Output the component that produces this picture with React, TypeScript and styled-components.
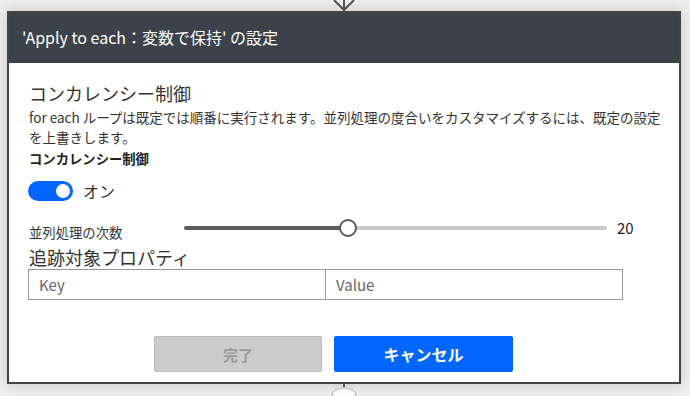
import React from "react";
import styled, { createGlobalStyle } from "styled-components";

const GlobalStyle = createGlobalStyle`
  html, body {
    margin: 0;
    padding: 0;
    background: #efefef;
    font-family: "Noto Sans CJK JP", "Noto Sans", sans-serif;
    color: #222;
  }
  * { box-sizing: border-box; }
`;

const Page = styled.div`
  width: 690px;
  height: 396px;
  padding-left: 7px;
  display: flex;
  flex-direction: column;
  overflow: hidden;
`;

const Connector = styled.div<{ $h: number }>`
  width: 674px;
  height: ${(p) => p.$h}px;
  display: flex;
  flex-direction: column;
  align-items: center;
`;

const Dialog = styled.div`
  width: 674px;
  border: 2px solid #454545;
  background: #fff;
  box-shadow: 0 0 14px rgba(0, 0, 0, 0.18);
  display: flex;
  flex-direction: column;
`;

const Header = styled.div`
  height: 50px;
  background: #3b4249;
  color: #fff;
  font-size: 16px;
  display: flex;
  align-items: center;
  padding-left: 13px;
  padding-bottom: 2px;
`;

const Body = styled.div`
  padding: 18px 14px 10px 19px;
  display: flex;
  flex-direction: column;
`;

const SectionTitle = styled.div<{ $mt?: number }>`
  font-size: 18px;
  line-height: 24px;
  color: #333;
  margin-top: ${(p) => p.$mt ?? 0}px;
  padding-left: 1px;
`;

const Description = styled.div`
  font-size: 13.5px;
  line-height: 20px;
  color: #333;
  margin-top: 2px;
  padding-left: 1px;
`;

const FieldLabel = styled.div`
  font-size: 13.33px;
  line-height: 20px;
  font-weight: 700;
  color: #222;
  margin-top: 2px;
  padding-left: 1px;
`;

const ToggleRow = styled.div`
  display: flex;
  align-items: center;
  gap: 10px;
  margin-top: 12px;
  height: 20px;
`;

const Toggle = styled.div<{ $on: boolean }>`
  position: relative;
  width: 45px;
  height: 20px;
  border-radius: 10px;
  background: ${(p) => (p.$on ? "#0066ff" : "#c8c8c8")};
`;

const Knob = styled.span<{ $on: boolean }>`
  position: absolute;
  top: 3px;
  ${(p) => (p.$on ? "right: 3px;" : "left: 3px;")}
  width: 14px;
  height: 14px;
  border-radius: 50%;
  background: #fff;
`;

const ToggleText = styled.span`
  font-size: 16px;
  line-height: 20px;
  color: #333;
`;

const SliderRow = styled.div`
  display: flex;
  align-items: center;
  height: 20px;
  margin-top: 17px;
`;

const SliderLabel = styled.div`
  width: 156px;
  font-size: 13.33px;
  line-height: 20px;
  color: #333;
  padding-left: 1px;
  margin-top: 10px;
`;

const Track = styled.div`
  position: relative;
  width: 423px;
  height: 4px;
  border-radius: 2px;
  background: #c8c8c8;
`;

const Fill = styled.div`
  height: 100%;
  border-radius: 2px;
  background: #5b5b5b;
`;

const Thumb = styled.div`
  position: absolute;
  top: 50%;
  width: 18px;
  height: 18px;
  margin: -9px 0 0 -9px;
  border-radius: 50%;
  border: 2px solid #5b5b5b;
  background: #fff;
`;

const SliderValue = styled.div`
  margin-left: 10px;
  font-size: 15px;
  line-height: 20px;
  color: #222;
`;

const InputPair = styled.div`
  display: flex;
  width: 595px;
`;

const TextInput = styled.input<{ $joined?: boolean }>`
  flex: 1;
  min-width: 0;
  height: 31px;
  border: 1px solid #979797;
  ${(p) => (p.$joined ? "border-left: none;" : "")}
  padding: 0 10px;
  font-family: inherit;
  font-size: 15px;
  color: #333;
  background: #fff;
  outline: none;
  &::placeholder { color: #666; }
`;

const Footer = styled.div`
  display: flex;
  gap: 12px;
  margin-top: 36px;
  padding-left: 126px;
`;

const Button = styled.button<{ $primary?: boolean }>`
  height: 36px;
  width: ${(p) => (p.$primary ? 179 : 168)}px;
  border-radius: 2px;
  font-family: inherit;
  font-weight: 700;
  font-size: ${(p) => (p.$primary ? 16 : 15)}px;
  border: 1px solid ${(p) => (p.$primary ? "#0066ff" : "#b8b8b8")};
  background: ${(p) => (p.$primary ? "#0066ff" : "#cccccc")};
  color: ${(p) => (p.$primary ? "#fff" : "#9a9a9a")};
  padding: 0;
`;

const LinkLine = styled.div`
  width: 2px;
  height: 6px;
  background: #555;
`;

const Node = styled.div`
  width: 26px;
  height: 26px;
  border-radius: 50%;
  border: 2px solid #cfcfcf;
  background: #fafafa;
`;

export default function App() {
  const min = 1;
  const max = 50;
  const value = 20;
  const pct = ((value - min) / (max - min)) * 100;
  return (
    <>
      <GlobalStyle />
      <Page>
        <Connector $h={11}>
          <svg width="24" height="11" viewBox="0 0 24 11">
            <path d="M12 0 V10 M2 0 L12 10 L22 0" stroke="#555" strokeWidth="2" fill="none" />
          </svg>
        </Connector>
        <Dialog>
          <Header>'Apply to each：変数で保持' の設定</Header>
          <Body>
            <SectionTitle>コンカレンシー制御</SectionTitle>
            <Description>
              for each ループは既定では順番に実行されます。並列処理の度合いをカスタマイズするには、既定の設定
              <br />
              を上書きします。
            </Description>
            <FieldLabel>コンカレンシー制御</FieldLabel>
            <ToggleRow>
              <Toggle $on>
                <Knob $on />
              </Toggle>
              <ToggleText>オン</ToggleText>
            </ToggleRow>
            <SliderRow>
              <SliderLabel>並列処理の次数</SliderLabel>
              <Track>
                <Fill style={{ width: `${pct}%` }} />
                <Thumb style={{ left: `${pct}%` }} />
              </Track>
              <SliderValue>{value}</SliderValue>
            </SliderRow>
            <SectionTitle $mt={7}>追跡対象プロパティ</SectionTitle>
            <InputPair>
              <TextInput placeholder="Key" />
              <TextInput $joined placeholder="Value" />
            </InputPair>
            <Footer>
              <Button disabled>完了</Button>
              <Button $primary>キャンセル</Button>
            </Footer>
          </Body>
        </Dialog>
        <Connector $h={20}>
          <LinkLine />
          <Node />
        </Connector>
      </Page>
    </>
  );
}
